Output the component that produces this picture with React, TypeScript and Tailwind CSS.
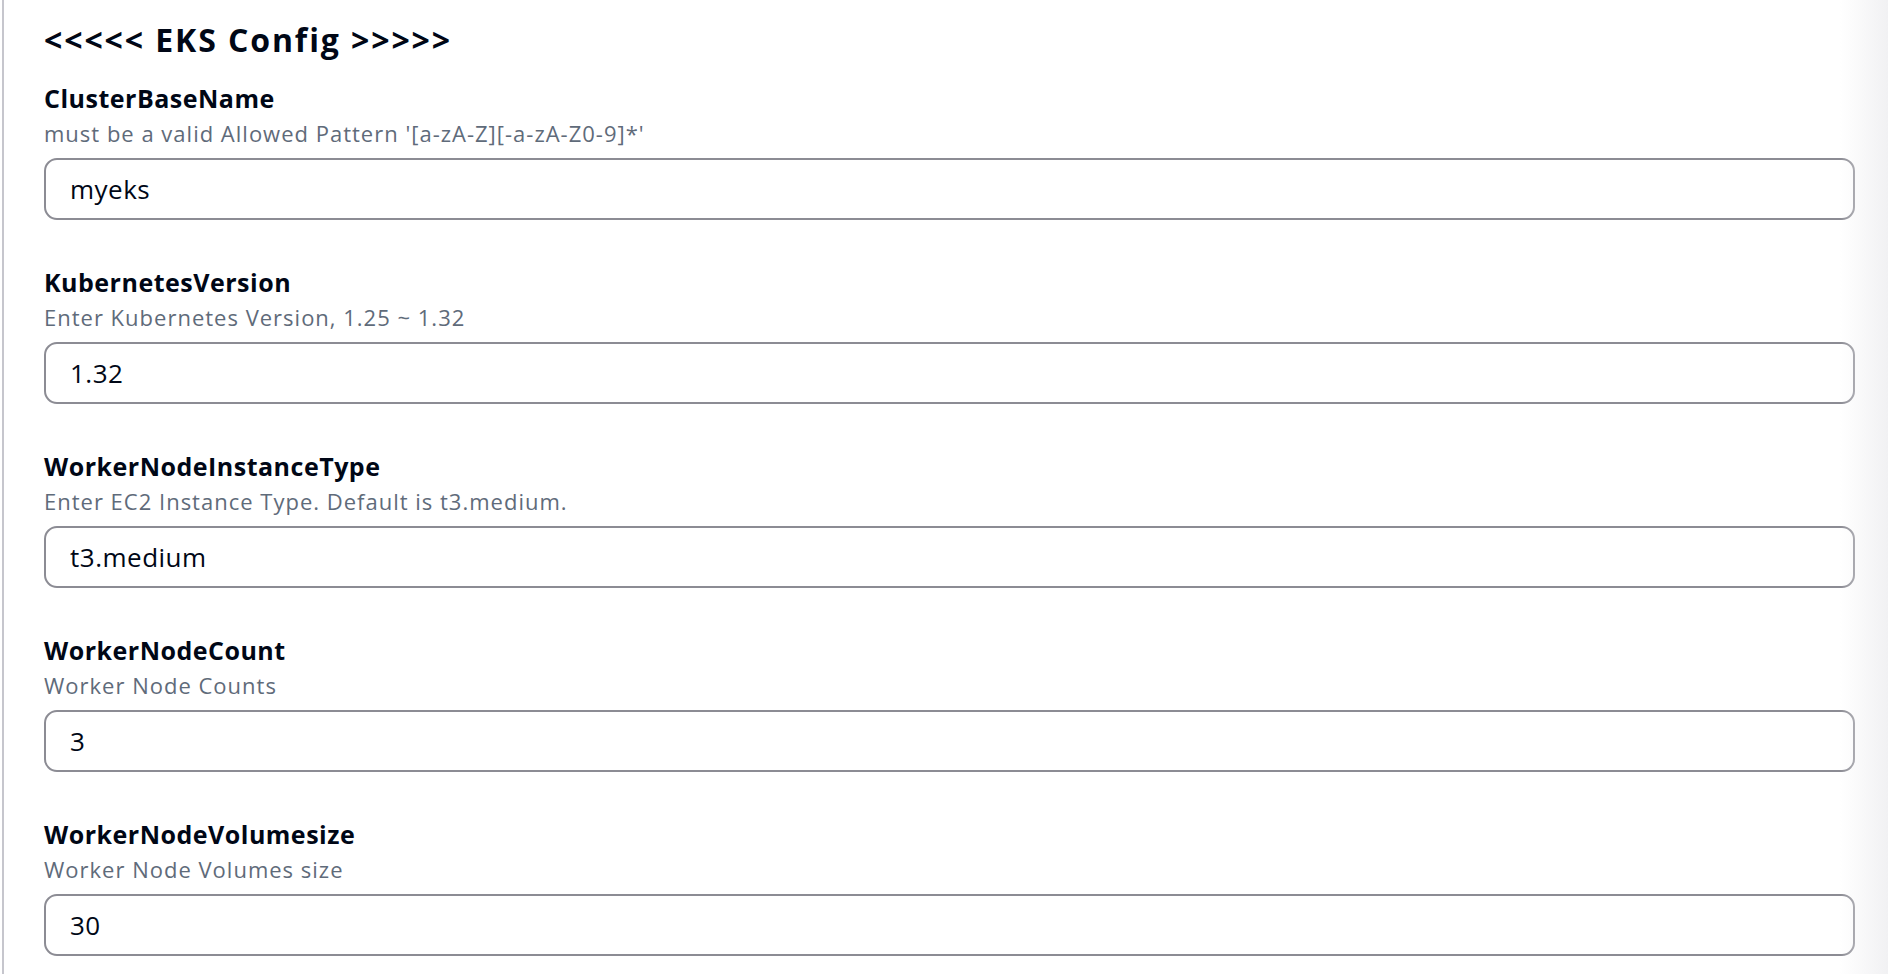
const fields = [
  {
    name: "ClusterBaseName",
    description: "must be a valid Allowed Pattern '[a-zA-Z][-a-zA-Z0-9]*'",
    value: "myeks",
  },
  {
    name: "KubernetesVersion",
    description: "Enter Kubernetes Version, 1.25 ~ 1.32",
    value: "1.32",
  },
  {
    name: "WorkerNodeInstanceType",
    description: "Enter EC2 Instance Type. Default is t3.medium.",
    value: "t3.medium",
  },
  {
    name: "WorkerNodeCount",
    description: "Worker Node Counts",
    value: "3",
  },
  {
    name: "WorkerNodeVolumesize",
    description: "Worker Node Volumes size",
    value: "30",
  },
];

function Field({ name, description, value }: { name: string; description: string; value: string }) {
  return (
    <div className="flex flex-col">
      <label className="text-[25px] leading-[30px] font-bold tracking-[0.5px] text-[#000716]">{name}</label>
      <p className="mt-[6px] text-[22px] leading-[28px] tracking-[1px] text-[#5f6b7a]">{description}</p>
      <input
        readOnly
        value={value}
        className="mt-[11px] h-[62px] w-full rounded-[13px] border-2 border-[#8c8c94] bg-white px-[24px] text-[26px] tracking-[0.5px] text-[#000716] outline-none"
        style={{ fontFamily: "inherit" }}
      />
    </div>
  );
}

export default function App() {
  return (
    <div
      className="relative h-[974px] w-full overflow-hidden bg-white"
      style={{ fontFamily: '"Open Sans", "Noto Sans", sans-serif' }}
    >
      <div className="ml-[2px] h-full border-l-2 border-[#c6c6cd] pl-[40px] pr-[33px] pt-[20px]">
        <h2 className="text-[32px] leading-[40px] font-bold tracking-[1.9px] text-[#000716]">
          &lt;&lt;&lt;&lt;&lt; EKS Config &gt;&gt;&gt;&gt;&gt;
        </h2>
        <div className="mt-[23px] flex flex-col gap-[47px]">
          {fields.map((f) => (
            <Field key={f.name} {...f} />
          ))}
        </div>
      </div>
      <div className="pointer-events-none absolute inset-y-0 right-0 w-[48px] bg-gradient-to-r from-transparent to-[#f1f1f3]" />
    </div>
  );
}
